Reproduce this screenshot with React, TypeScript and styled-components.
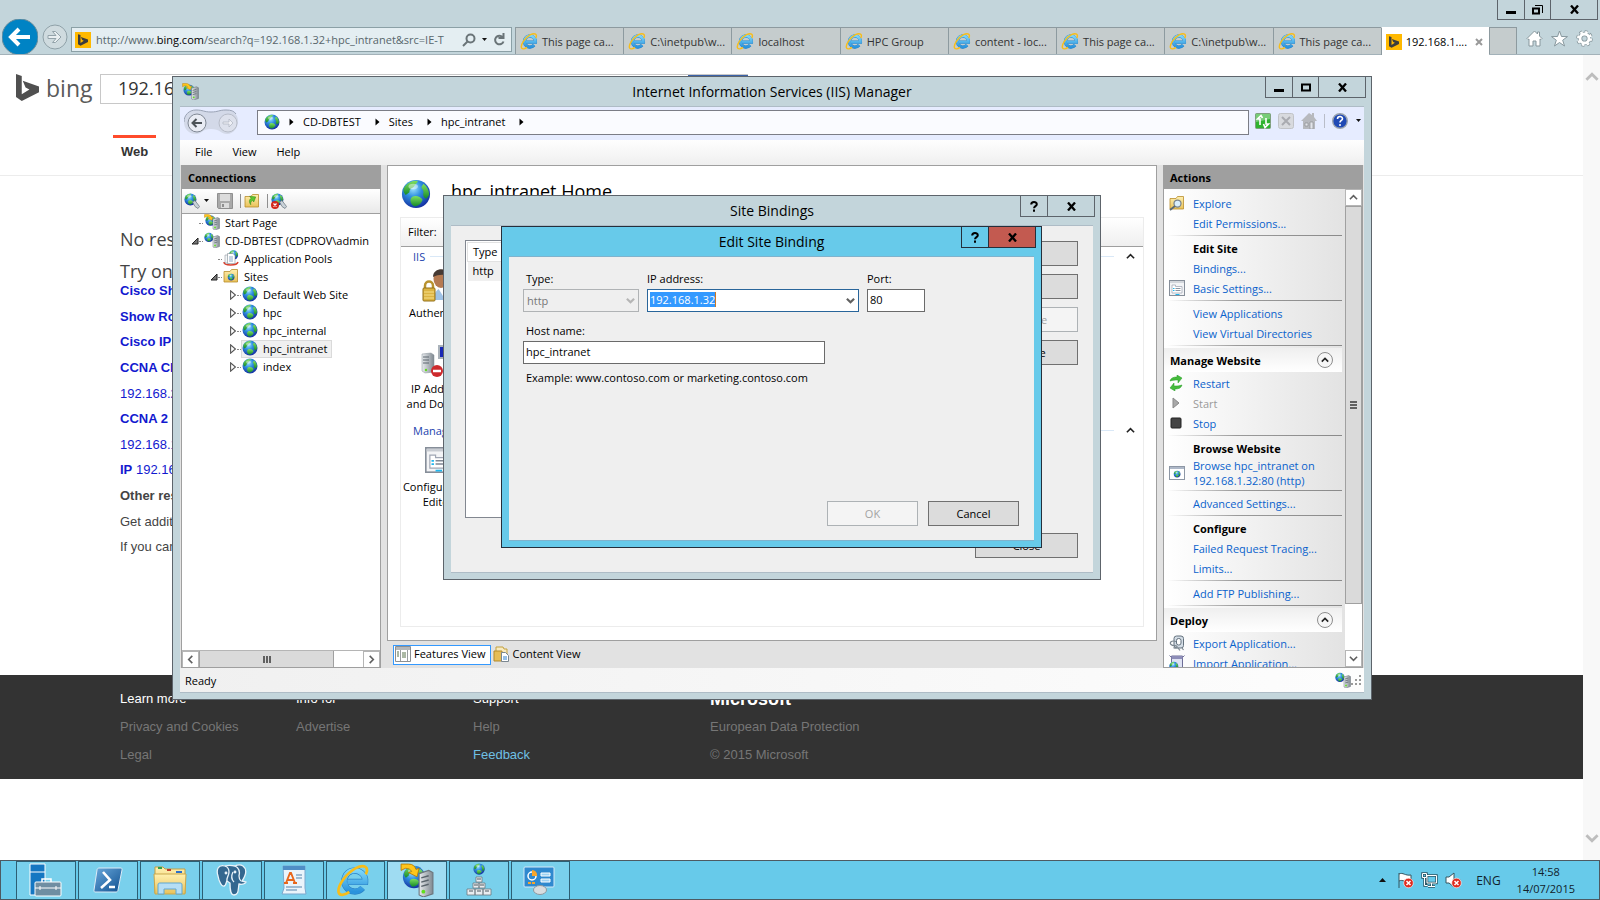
import React from "react";
import styled, { createGlobalStyle, css } from "styled-components";

const ui = `"Open Sans", "Noto Sans", sans-serif`;
const web = `"Liberation Sans", Arial, sans-serif`;

const GlobalStyle = createGlobalStyle`
  * { box-sizing: border-box; }
  body { margin: 0; background: #fff; font-family: ${ui}; font-size: 11px; color: #000; }
  button, input, select { font: inherit; color: inherit; margin: 0; padding: 0; border-radius: 0; }
  a { color: inherit; text-decoration: none; }
  svg { display: block; flex: none; }
  ul { list-style: none; margin: 0; padding: 0; }
  h1, h2, h3, p { margin: 0; font-size: inherit; font-weight: inherit; }
`;

/* ---------- icons ---------- */

type IconProps = { size?: number };

const DefsSvg = styled.svg`position: absolute;`;
const Defs = () => (
  <DefsSvg width="0" height="0" aria-hidden="true">
    <defs>
      <radialGradient id="sea" cx=".4" cy=".3" r=".75">
        <stop offset="0" stopColor="#9fe4ff" />
        <stop offset=".4" stopColor="#2f8fe0" />
        <stop offset="1" stopColor="#12279b" />
      </radialGradient>
      <linearGradient id="land" x1="0" y1="0" x2="0" y2="1">
        <stop offset="0" stopColor="#7fe060" />
        <stop offset="1" stopColor="#168a2a" />
      </linearGradient>
      <linearGradient id="ieBlue" x1="0" y1="0" x2="0" y2="1">
        <stop offset="0" stopColor="#7dd6fa" />
        <stop offset="1" stopColor="#2a93dc" />
      </linearGradient>
      <linearGradient id="steel" x1="0" y1="0" x2="1" y2="0">
        <stop offset="0" stopColor="#e8ebee" />
        <stop offset="1" stopColor="#7f8890" />
      </linearGradient>
      <linearGradient id="folder" x1="0" y1="0" x2="0" y2="1">
        <stop offset="0" stopColor="#fff0b0" />
        <stop offset="1" stopColor="#e9c25a" />
      </linearGradient>
      <linearGradient id="shell" x1="0" y1="0" x2="1" y2="1">
        <stop offset="0" stopColor="#6aa9dc" />
        <stop offset="1" stopColor="#0f4f8f" />
      </linearGradient>
    </defs>
  </DefsSvg>
);

const GlobeArt = () => (
  <>
    <circle cx="16" cy="16" r="15" fill="url(#sea)" />
    <path d="M4 8C8 3 14 1 18 2c-1 3-3 3-4 6-2 2-5 2-5 6l-4 3C2 14 2 11 4 8Z" fill="url(#land)" />
    <path d="M24 5c4 3 6 7 6 12l-3 4c-3-1-4-4-3-7 0-3-3-4-2-6Z" fill="url(#land)" />
    <path d="M12 19c4-2 9 0 11 3-1 4-5 7-9 7-3-1-6-7-2-10Z" fill="url(#land)" />
    <ellipse cx="13" cy="8" rx="5" ry="3" fill="#fff" opacity=".45" />
  </>
);

const Globe = ({ size = 16 }: IconProps) => (
  <svg width={size} height={size} viewBox="0 0 32 32"><GlobeArt /></svg>
);

const ServerArt = () => (
  <>
    <path d="M18 10l9-3 4 2v20l-9 3-4-2Z" fill="url(#steel)" stroke="#6c757c" />
    <path d="M20 14l7-2M20 18l7-2M20 22l7-2" stroke="#59636b" strokeWidth="1.400" />
    <circle cx="22" cy="27" r="1.800" fill="#5fe01c" />
  </>
);

const IisIcon = ({ size = 16, arrow = true }: IconProps & { arrow?: boolean }) => (
  <svg width={size} height={size} viewBox="0 0 32 32">
    <g transform={arrow ? "translate(2 2) scale(.7)" : "translate(0 1) scale(.62)"}><GlobeArt /></g>
    {arrow && <path d="M1 1h7c4 0 6 2 7 5l3-1-2 8-8-4 3-1c-1-2-3-3-6-3l-4 2Z" fill="#ffc61a" stroke="#b57a00" strokeWidth=".8" />}
    <ServerArt />
  </svg>
);

const IeIcon = ({ size = 18 }: IconProps) => (
  <svg width={size} height={size} viewBox="0 0 24 24" fill="none">
    <path d="M8 13.400H20.600A7.400 7.400 0 1 0 18.800 17.600" stroke="#2a80c4" strokeWidth="4.400" />
    <path d="M8 13.400H20.600A7.400 7.400 0 1 0 18.800 17.600" stroke="url(#ieBlue)" strokeWidth="3.600" />
    <path d="M21 8C23.600 3 20 .6 14 3.600 7 7.400 1 16 1.800 20.500 2.400 23.600 6 22.800 9.400 20.400" stroke="#f7bd1a" strokeWidth="1.900" />
  </svg>
);

const BingMark = ({ w, h, fill }: { w: number; h: number; fill: string }) => (
  <svg width={w} height={h} viewBox="0 0 24 28">
    <path d="M0 0l6 2v19l8-5-4-2-3-7 17 6v6L6 28l-6-4Z" fill={fill} />
  </svg>
);

const BingTileBox = styled.span`
  display: flex; align-items: center; justify-content: center; flex: none;
  width: 16px; height: 16px; background: #ffb900;
`;
const BingTile = () => <BingTileBox><BingMark w={10} h={12} fill="#3c3c3c" /></BingTileBox>;

const FolderIcon = ({ kind }: { kind: "up" | "sites" | "explore" }) => (
  <svg width="16" height="16" viewBox="0 0 32 32">
    <path d="M2 7h12l3-4h12v25H2Z" fill="url(#folder)" stroke="#b98d2b" strokeWidth="1.600" />
    {kind === "up" && <path d="M8 20c0-7 3-10 8-10V5l9 8-9 6v-4c-4 0-6 1-8 5Z" fill="#5cc431" stroke="#2f8a12" transform="rotate(-35 16 13)" />}
    {kind === "sites" && <g transform="translate(9 11) scale(.45)"><GlobeArt /></g>}
    {kind === "explore" && (
      <>
        <circle cx="17" cy="17" r="7" fill="#d8eefc" stroke="#78848e" strokeWidth="2.500" />
        <path d="M12 22l-10 8" stroke="#5b6a75" strokeWidth="3.500" />
      </>
    )}
  </svg>
);

const PoolsIcon = () => (
  <svg width="16" height="16" viewBox="0 0 32 32">
    <g transform="translate(11 0) scale(.62)"><GlobeArt /></g>
    <path d="M2 24c0 8 26 8 28 0" fill="none" stroke="#d8412f" strokeWidth="3" />
    <path d="M4 10h10v16H4z" fill="#f4f6f8" stroke="#7c8790" />
    <path d="M9 7h11l4 4v16H9z" fill="#fff" stroke="#6a7680" />
    <path d="M12 14h8M12 18h8M12 22h8" stroke="#6f93b5" strokeWidth="1.600" />
  </svg>
);

const ConnectIcon = ({ remove }: { remove?: boolean }) => (
  <svg width="16" height="16" viewBox="0 0 32 32">
    <g transform="scale(.8)"><GlobeArt /></g>
    <path d="M17 18l5-3 9 12-3 4-6-4Z" fill="#c9d2d8" stroke="#6c7880" strokeWidth="1.500" />
    {remove && (
      <>
        <circle cx="8" cy="24" r="8" fill="#d3261a" />
        <path d="M5 21l6 6M11 21l-6 6" stroke="#fff" strokeWidth="2.500" />
      </>
    )}
  </svg>
);

const SaveIcon = () => (
  <svg width="16" height="16" viewBox="0 0 16 16">
    <path d="M.5.500h15v15h-14l-1-1Z" fill="#a9a9a9" stroke="#8f8f8f" />
    <path d="M3 1h10v7H3zM4 10h8v5H4z" fill="#dcdcdc" />
    <path d="M5 11h2v3H5z" fill="#8f8f8f" />
  </svg>
);

const FormIcon = ({ size = 16 }: IconProps) => (
  <svg width={size} height={size} viewBox="0 0 32 32">
    <rect x="1" y="1" width="30" height="30" fill="#f3f4f6" stroke="#868e99" strokeWidth="2" />
    <path d="M2 4h28" stroke="#c8ccd2" strokeWidth="3" />
    <path d="M6 10h7v3h13v13H6Z" fill="#fff" stroke="#a0a6b4" strokeWidth="1.500" />
    <path d="M13 17h10M13 21h10" stroke="#7f8794" strokeWidth="1.800" />
    <path d="M8 17h3M8 21h3M13 29h8" stroke="#1fb6ee" strokeWidth="2" />
  </svg>
);

const BrowseIcon = () => (
  <svg width="16" height="16" viewBox="0 0 32 32">
    <rect x="1" y="3" width="30" height="26" fill="#fff" stroke="#8d97a5" strokeWidth="2" />
    <path d="M2 6h28" stroke="#aeb8c8" strokeWidth="4" />
    <g transform="translate(9 11) scale(.45)"><GlobeArt /></g>
  </svg>
);

const RestartIcon = () => (
  <svg width="14" height="16" viewBox="0 0 14 16" fill="#45bb3c" stroke="#249a24" strokeWidth=".5">
    <path d="M1 6c1-3 3-4 7-4V0l5 3-4 5V5C6 5 4 5 1 6Z" />
    <path d="M13 10c-1 3-3 4-7 4v2l-5-3 4-5v3c3 0 5 0 8-1Z" />
  </svg>
);

const PlayIcon = () => (
  <svg width="14" height="16" viewBox="0 0 14 16"><path d="M4 3v10l6-5Z" fill="#a8a8a8" stroke="#8a8a8a" /></svg>
);
const StopIcon = () => (
  <svg width="14" height="16" viewBox="0 0 14 16"><rect x="2" y="3" width="10" height="10" rx="1" fill="#444" stroke="#222" /></svg>
);

const ExportIcon = () => (
  <svg width="16" height="16" viewBox="0 0 32 32" fill="none">
    <rect x="10" y="2" width="19" height="24" rx="5" fill="#d4dde6" stroke="#63717d" strokeWidth="2" />
    <rect x="15" y="7" width="9" height="13" rx="4" fill="#fff" stroke="#63717d" strokeWidth="2" />
    <path d="M14 13C5 10 0 15 4 19s10 1 12 4-5 4-7 2M18 26l4 5M26 26l3 4" stroke="#7c8790" strokeWidth="2.400" />
  </svg>
);
const ImportIcon = () => (
  <svg width="16" height="16" viewBox="0 0 32 32">
    <path d="M1 1l6 6M31 1l-6 6" stroke="#73739a" strokeWidth="2" />
    <path d="M5 2h22v27H5z" fill="#dfe3f3" stroke="#6d6d96" strokeWidth="2" />
    <path d="M5 2h22v6H5z" fill="#8d8db8" />
    <g transform="translate(0 13) scale(.6)"><GlobeArt /></g>
  </svg>
);

const AuthIcon = () => (
  <svg width="32" height="34" viewBox="0 0 32 34">
    <path d="M12 31c0-9 4-12 9-12s10 3 10 12Z" fill="#9fc3e6" />
    <path d="M16 19l5 8 3-8Z" fill="#fff" />
    <ellipse cx="19" cy="10" rx="7.500" ry="9" fill="#b57a51" />
    <path d="M11 8C11 1 18-1 24 1c4 1 4 5 4 7-4-3-11-3-17 0Z" fill="#463a33" />
    <path d="M3 21v-4c0-6 8-6 8 0v4" fill="none" stroke="#b8922f" strokeWidth="2.500" />
    <rect x="1" y="19" width="12" height="13" rx="1" fill="#dcb443" stroke="#93701a" />
    <path d="M2 23h10M2 26h10M2 29h10" stroke="#f7e08c" />
  </svg>
);
const IpIcon = () => (
  <svg width="34" height="34" viewBox="0 0 34 34">
    <path d="M1 9l9-1 3 2v17l-9 1-3-2Z" fill="url(#steel)" stroke="#879098" strokeWidth=".5" />
    <path d="M2 12h6M2 15h6M2 18h6" stroke="#5c666e" />
    <circle cx="5" cy="25" r="1.200" fill="#60d81e" />
    <rect x="18" y="1" width="15" height="12" fill="#1627b6" stroke="#aab2ba" strokeWidth="2" />
    <circle cx="16" cy="26" r="6" fill="#cd2a2d" />
    <path d="M12 26h8" stroke="#fff" strokeWidth="2.500" />
  </svg>
);

const RefreshIcon = () => (
  <svg width="16" height="16" viewBox="0 0 16 16">
    <rect x=".5" y=".5" width="15" height="15" rx="1" fill="#2fb32f" stroke="#7f9f7f" />
    <path d="M1 1h14v5L1 9Z" fill="#fff" opacity=".35" />
    <path d="M5 12V6H2.500L6 2.500 7.500 5M11 5v6h2.500L10 14.500 8.500 11" fill="none" stroke="#fff" strokeWidth="1.600" />
  </svg>
);
const StopLoadIcon = () => (
  <svg width="16" height="16" viewBox="0 0 16 16">
    <rect x=".5" y=".5" width="15" height="15" rx="2" fill="#d8dade" stroke="#c1c3c7" />
    <path d="M4 4l8 8M12 4l-8 8" stroke="#a9abb0" strokeWidth="2" />
  </svg>
);
const HouseIcon = () => (
  <svg width="16" height="16" viewBox="0 0 16 16">
    <path d="M0 8L7 1l1-1 3 2V0h2v4l3 4h-2v8H2V8Z" fill="#b7b9be" />
    <path d="M4 10h3v3H4zM9 9h3v7H9z" fill="#e3e5ea" stroke="#8d8f94" strokeWidth=".7" />
  </svg>
);
const HelpIcon = () => (
  <svg width="16" height="16" viewBox="0 0 16 16">
    <circle cx="8" cy="8" r="7.300" fill="#1f49b5" stroke="#9aa3ad" strokeWidth="1.400" />
    <path d="M5.500 6c0-3.300 5-3.200 5-.3C10.500 7.500 8 7.500 8 9.600" fill="none" stroke="#fff" strokeWidth="1.600" />
    <circle cx="8" cy="12" r="1" fill="#fff" />
  </svg>
);

const FeaturesIcon = () => (
  <svg width="16" height="16" viewBox="0 0 16 16">
    <path d="M.5.500h15v15H.500Z" fill="#fff" stroke="#8b8f92" />
    <path d="M1 1h14v3H1z" fill="#b5b8ba" />
    <path d="M5.500 4v11M12.500 4v11" stroke="#9a9ea1" />
    <path d="M2 6h2M2 8h2M2 10h2M7 7h4M7 9h4M7 11h4" stroke="#59734a" />
  </svg>
);
const ContentIcon = () => (
  <svg width="16" height="16" viewBox="0 0 16 16">
    <path d="M3 1h7l1 2h3v8H3Z" fill="#f7eac0" stroke="#c4a13f" />
    <path d="M1 5h8v10H1Z" fill="#e6bd57" stroke="#b48a2b" />
    <path d="M8.500 6.500h4l3 3v6h-7Z" fill="#fff" stroke="#7a8791" />
    <path d="M10 11h4M10 13h4" stroke="#2f80cf" />
  </svg>
);

const Tri = ({ c = "#000", open, size = 5 }: { c?: string; open?: boolean; size?: number }) => (
  <svg width={size} height={size * 2 - 2} viewBox="0 0 5 8"><path d="M.5.500v7l4-3.500Z" fill={open ? "#fff" : c} stroke={c} strokeWidth={open ? 0.9 : 0} /></svg>
);
const Expanded = () => <svg width="8" height="8" viewBox="0 0 8 8"><path d="M7 1v6H1Z" fill="#777" stroke="#222" /></svg>;
const Caret = ({ up }: { up?: boolean }) => (
  <svg width="7" height="4" viewBox="0 0 7 4"><path d={up ? "M0 4L3.500 0 7 4Z" : "M1 0h5L3.500 3Z"} fill="#111" /></svg>
);
const Chevron = ({ dir, size = 9, c = "#606060", sw = 1.8 }: { dir: "up" | "down" | "left" | "right"; size?: number; c?: string; sw?: number }) => (
  <svg width={size} height={size} viewBox="0 0 10 10" fill="none" stroke={c} strokeWidth={sw}>
    <path d={{ up: "M1 7l4-4 4 4", down: "M1 3l4 4 4-4", left: "M7 1L3 5l4 4", right: "M3 1l4 4-4 4" }[dir]} />
  </svg>
);

const MinGlyph = () => <svg width="10" height="9" viewBox="0 0 10 9"><path d="M0 6h10v3H0Z" /></svg>;
const MaxGlyph = () => <svg width="10" height="9" viewBox="0 0 10 9"><path d="M1 1.500h8v6H1Z" fill="none" stroke="#000" strokeWidth="2" /></svg>;
const RestoreGlyph = () => (
  <svg width="11" height="10" viewBox="0 0 11 10" fill="none" stroke="#000">
    <path d="M1 3.500h6v5H1Z" strokeWidth="2" /><path d="M3 .5h7.500V8" />
  </svg>
);
const CloseGlyph = () => <svg width="9" height="9" viewBox="0 0 9 9"><path d="M1 .5l7 8M8 .5l-7 8" stroke="#000" strokeWidth="2.300" /></svg>;
const HelpGlyph = () => (
  <svg width="8" height="11" viewBox="0 0 8 11" fill="none" stroke="#000" strokeWidth="2">
    <path d="M1.200 3.500C1.200.300 6.800.300 6.800 3.200 6.800 5.200 4 5 4 7.300M4 8.600v2.200" />
  </svg>
);

/* ---------- Internet Explorer ---------- */

const Desktop = styled.div`
  position: relative; min-height: 100vh; display: flex; flex-direction: column; overflow: hidden;
`;
const Chrome = styled.header`
  height: 55px; background: #c3d5db; border-bottom: 1px solid #a3b2b9;
  display: flex; align-items: flex-end; position: relative;
`;
const NavButtons = styled.div`
  width: 71px; height: 36px; overflow: hidden; flex: none; padding: 1px 2px 0; display: flex; gap: 4px;
`;
const RoundButton = styled.button`border: 0; background: none; display: flex; align-items: flex-start;`;
const AddressBar = styled.div`
  flex: 0 1 441px; min-width: 0; height: 25px; margin: 0 3px 2px 0; padding: 0 5px 0 3px;
  border: 1px solid #8ba0a6; background: #e4eef2; display: flex; align-items: center; gap: 5px;
`;
const Url = styled.div`
  flex: 1; min-width: 0; overflow: hidden; white-space: nowrap; line-height: 20px; color: #58666c;
  b { font-weight: 400; color: #000; }
`;
const GlyphButton = styled.button`border: 0; background: none; display: flex; align-items: center; justify-content: center;`;
const Tabs = styled.nav`flex: 1; min-width: 0; height: 27px; display: flex;`;
const Tab = styled.a<{ $active?: boolean }>`
  flex: 1 1 108px; min-width: 0; display: flex; align-items: center; gap: 4px; padding: 0 3px 0 4px;
  border: 1px solid #8d9a9f; border-width: 1px 0 0 1px; background: #c5cccd;
  color: #333; white-space: nowrap; overflow: hidden;
  span { flex: 1; }
  ${BingTileBox} { flex: none; }
  ${p => p.$active && css`background: #fff; color: #000; height: 28px; border-top-color: #fff; padding-right: 6px; z-index: 1;`}
`;
const NewTab = styled.button`
  flex: 0 0 28px; border: 1px solid #8d9a9f; border-bottom: 0; background: #c5cccd;
`;
const ChromeTools = styled.div`width: 83px; height: 27px; flex: none; display: flex; align-items: center; justify-content: center; gap: 8px; padding: 0 0 4px 2px;`;

const CaptionButtons = styled.div`position: absolute; top: -1px; right: 5px; display: flex;`;
const CaptionButton = styled.button<{ $w: number; $close?: boolean; $dark?: string }>`
  width: ${p => p.$w}px; height: 22px; margin-right: -1px; border: 1px solid ${p => p.$dark ?? "#5d646b"};
  background: ${p => (p.$close ? "#c35a50" : "none")};
  display: flex; align-items: center; justify-content: center;
`;

const Viewport = styled.div`flex: 1; display: flex; background: #fff;`;
const Page = styled.main`flex: 1; min-width: 0; font-family: ${web}; font-size: 13px;`;
const PageScroll = styled.div`
  width: 17px; background: #f8f8f8; display: flex; flex-direction: column; justify-content: space-between; align-items: center; padding: 15px 0 15px;
`;
const PageHeader = styled.div`height: 121px; padding: 19px 16px 0; border-bottom: 1px solid #ececec;`;
const SearchRow = styled.form`display: flex; height: 30px; align-items: center;`;
const Brand = styled.a`
  display: flex; align-items: center; gap: 7px; width: 84px; font: 23px/26px ${ui}; color: #5a5a5a; padding-bottom: 3px;
`;
const SearchInput = styled.input`
  width: 588px; height: 30px; border: 1px solid #c8c8c8; border-right: 0; padding: 0 17px 2px; font: 18px ${ui}; color: #333;
`;
const SearchButton = styled.button`width: 60px; height: 30px; border: 1px solid #c8c8c8; border-width: 1px 0; background: #3a62a8;`;
const PageNav = styled.nav`padding: 31px 97px 0; display: flex;`;
const PageNavLink = styled.a`
  width: 43px; border-top: 3px solid #ff4b2b; padding-top: 5px; line-height: 18px; text-align: center; font-weight: 700; color: #333;
`;
const Results = styled.section`padding: 51px 120px 109px;`;
const Lead = styled.p`font: 18px/24px ${ui}; color: #444; & + & { margin-top: 8px; }`;
const ResultList = styled.ul`
  height: 282px; margin-top: 1px; display: grid; grid-auto-rows: 1fr; line-height: 14px; color: #444; white-space: nowrap;
`;
const ResultLink = styled.a`color: #1219cf;`;
const Footer = styled.footer`
  background: #333; color: #767676; padding: 10px 120px; display: grid; grid-template-columns: 176px 177px 237px 1fr; line-height: 28px;
`;
const FooterHead = styled.h3<{ $brand?: boolean }>`
  color: #fff; ${p => p.$brand && css`font-size: 18px; font-weight: 700;`}
`;
const Feedback = styled.a`color: #6fc0e4;`;

/* ---------- windows ---------- */

const Window = styled.section<{ $active?: boolean }>`
  position: absolute; display: flex; flex-direction: column; padding: 0 7px 6px;
  background: ${p => (p.$active ? "#67caea" : "#c3d5db")};
  border: 1px solid ${p => (p.$active ? "#252f3b" : "#5d646b")};
`;
const IisWindow = styled(Window)`left: 172px; top: 76px; width: 75%; height: 624px;`;
const BindingsWindow = styled(Window)`left: 443px; top: 195px; width: 658px; height: 385px;`;
const EditWindow = styled(Window)`left: 501px; top: 226px; width: 541px; height: 322px;`;
const TitleBar = styled.div`
  height: 29px; flex: none; display: flex; align-items: center; padding-left: 2px; position: relative;
  h1 { position: absolute; left: 0; right: 0; text-align: center; font-size: 14px; line-height: 29px; pointer-events: none; }
  ${CaptionButtons} { right: -1px; }
`;
const Client = styled.div<{ $active?: boolean }>`
  flex: 1; min-height: 0; display: flex; flex-direction: column; background: #efefef;
  border: 1px solid ${p => (p.$active ? "#7fb3cd" : "#aebcc6")}; border-width: 1px 0;
`;

const CrumbRow = styled.div`
  height: 33px; flex: none; background: #e6ecff; display: flex; align-items: center; padding: 0 2px 3px 4px;
`;
const CrumbBar = styled.nav`
  flex: 1; height: 25px; border: 1px solid #7b7d86; background: #fafbff; margin: 0 6px 0 19px; padding: 0 0 1px 6px;
  display: flex; align-items: center;
`;
const Crumb = styled.a`padding: 0 14px 0 9px;`;
const CrumbGlobe = styled.span`padding-right: 9px;`;
const CrumbTools = styled.div`display: flex; align-items: center; gap: 7px; padding-bottom: 3px;`;
const ToolRule = styled.i<{ $dark?: boolean }>`width: 1px; height: 14px; background: ${p => (p.$dark ? "#8f8f8f" : "#b9bdc8")};`;
const MenuBar = styled.nav`
  height: 25px; flex: none; background: linear-gradient(#fefefe, #efefef); display: flex; gap: 20px; padding: 0 15px; line-height: 22px;
  button { border: 0; background: none; padding-bottom: 2px; }
`;
const Body = styled.div`
  flex: 1; min-height: 0; background: #e2e2e2; display: grid; grid-template-columns: 200px minmax(0, 1fr) 200px; gap: 6px; padding: 0 1px;
`;
const Panel = styled.section`
  min-height: 0; display: flex; flex-direction: column; border: 1px solid #9f9f9f; background: #fff; overflow: hidden;
`;
const PanelTitle = styled.h2`height: 23px; flex: none; background: #9f9f9f; padding: 0 6px; line-height: 23px; font-weight: 700;`;
const PanelTools = styled.div`
  height: 25px; flex: none; border-bottom: 1px solid #9f9f9f; background: linear-gradient(#fff, #e9e9e9);
  display: flex; align-items: center; padding: 0 2px; gap: 7px;
`;
const ToolGroup = styled.span`display: flex; align-items: center; gap: 3px;`;
const Tree = styled.ul`flex: 1; min-height: 0; overflow: hidden;`;
const TreeRow = styled.li<{ $depth: number }>`
  height: 18px; display: flex; align-items: center; white-space: nowrap; padding-left: ${p => 8 + 19 * p.$depth}px;
`;
const Twisty = styled.span`width: 9px; flex: none; display: flex; justify-content: center;`;
const Dots = styled.i`width: 4px; flex: none; border-top: 1px dotted #888;`;
const Node = styled.a<{ $selected?: boolean }>`
  height: 18px; display: flex; align-items: center; gap: 5px; padding: 0 4px 2px 0;
  border: 1px solid ${p => (p.$selected ? "#dadada" : "transparent")}; background: ${p => (p.$selected ? "#f0f0f0" : "none")};
`;
const HScroll = styled.div`height: 17px; flex: none; border-top: 1px solid #b5b5b5; display: grid; grid-template-columns: 17px 135px 1fr 17px;`;
const ScrollButton = styled.button`
  border: 1px solid #b5b5b5; background: #fff; display: flex; align-items: center; justify-content: center; height: 17px;
`;
const HThumb = styled.div`border: 1px solid #a0a0a0; border-width: 0 1px; background: #dadada; display: flex; justify-content: center; align-items: center; gap: 1px;`;
const VThumb = styled.div`
  height: 398px; border: 1px solid #a0a0a0; background: #dadada; display: flex; flex-direction: column; justify-content: center; align-items: center; gap: 1px;
`;
const Grip = styled.i<{ $v?: boolean }>`background: #606060; width: ${p => (p.$v ? 7 : 2)}px; height: ${p => (p.$v ? 2 : 7)}px;`;

const Center = styled.div`display: flex; flex-direction: column; min-height: 0; min-width: 0;`;
const HomePanel = styled(Panel)`flex: 1; padding: 13px 12px;`;
const HomeTitle = styled.div`
  height: 38px; flex: none; display: flex; align-items: flex-start; gap: 20px; padding-left: 1px;
  h1 { font-size: 18px; line-height: 24px; }
`;
const FeatureBox = styled.div`flex: 1; border: 1px solid #ececec; overflow: hidden;`;
const FilterBar = styled.div`height: 29px; border-bottom: 1px solid #9f9f9f; background: linear-gradient(#fff, #efefef); padding: 0 7px; line-height: 27px;`;
const GroupHead = styled.div`
  height: 20px; display: flex; align-items: center; gap: 5px; padding: 0 8px 2px 12px; color: #1b3fae;
  i { flex: 1; height: 1px; background: #d9e8f7; }
  svg { margin-left: 7px; }
`;
const Feature = styled.a<{ $h: number }>`
  width: 74px; height: ${p => p.$h}px; display: flex; flex-direction: column; align-items: center; text-align: center; line-height: 15px; white-space: nowrap;
`;
const FeatureArt = styled.span`height: 38px; display: flex; align-items: center;`;
const ViewTabs = styled.div`height: 27px; flex: none; display: flex; align-items: center; padding: 0 6px;`;
const ViewTab = styled.button<{ $on?: boolean }>`
  height: 20px; display: flex; align-items: center; gap: 3px; padding: 0 5px 2px 1px; white-space: nowrap;
  border: 1px solid ${p => (p.$on ? "#3399ff" : "transparent")}; background: ${p => (p.$on ? "#fff" : "none")};
`;

const ActionBody = styled.div`flex: 1; min-height: 0; display: grid; grid-template-columns: 1fr 17px; background: linear-gradient(90deg, #fff, #e0e0e0);`;
const ActionList = styled.div`overflow: hidden; padding-top: 5px; padding-right: 3px; white-space: nowrap;`;
const VScroll = styled.div`background: #fff; display: grid; grid-template-rows: 17px 398px 1fr 17px;`;
const ActionRow = styled.div`height: 20px; display: flex; align-items: center; padding-bottom: 2px;`;
const ActionIcon = styled.span`width: 29px; padding-left: 5px; flex: none;`;
const ActionLink = styled.a<{ $off?: boolean }>`color: ${p => (p.$off ? "#9a9a9a" : "#0a62cc")}; line-height: 15px;`;
const ActionHead = styled.h3`font-weight: 700;`;
const ActionTall = styled(ActionRow)`height: 30px;`;
const Rule = styled.div<{ $tight?: boolean }>`
  height: ${p => (p.$tight ? 4 : 5)}px; padding-top: 1px;
  &::before { content: ""; display: block; height: 1px; margin-left: 3px; background: linear-gradient(90deg, transparent, #9a9a9a 40%, #8a8a8a); }
`;
const ActionGroup = styled.div`
  height: 24px; margin-bottom: 2px; padding: 0 9px 0 6px; display: flex; align-items: center; justify-content: space-between; font-weight: 700;
  background: linear-gradient(#efefef, #fff);
`;
const Collapse = styled.button`
  width: 16px; height: 16px; border: 1px solid #8d8d8d; border-radius: 8px; background: #f6f6f6; display: flex; align-items: center; justify-content: center;
`;
const StatusBar = styled.footer`
  height: 24px; flex: none; background: linear-gradient(90deg, #f0f0f0, #fdfdfd); padding: 0 3px 0 5px; display: flex; align-items: center;
  span { flex: 1; }
`;

/* ---------- dialogs ---------- */

const DialogButton = styled.button<{ $w: number }>`
  width: ${p => p.$w}px; height: 25px; border: 1px solid #707070; background: #dcdcdc;
  &:disabled { border-color: #adb2b5; background: #f4f4f4; color: #a3a3a3; }
`;
const BindingsForm = styled.div`display: grid; grid-template-columns: 1fr 103px; gap: 15px 10px; padding: 14px 15px 0 14px;`;
const ButtonColumn = styled.div`display: flex; flex-direction: column; gap: 8px; padding-top: 1px;`;
const ListBox = styled.div`height: 278px; border: 1px solid #828790; background: #fff; padding: 1px;`;
const BindingsTable = styled.table`
  width: 100%; border-collapse: collapse; text-align: left;
  th { font-weight: 400; height: 19px; padding: 0 5px 2px; border: 1px solid #e2e2e2; }
  td { height: 19px; padding: 0 5px 2px; background: #f0f0f0; }
`;
const CloseRow = styled.div`grid-column: 2;`;

const EditForm = styled.form`flex: 1; display: flex; flex-direction: column; padding: 13px 15px 14px 14px;`;
const FieldRow = styled.div`display: flex; gap: 8px; margin-bottom: 10px;`;
const Field = styled.div<{ $w: number }>`width: ${p => p.$w}px;`;
const Label = styled.label<{ $in?: boolean }>`display: block; height: 19px; line-height: 18px; padding-left: ${p => (p.$in ? 3 : 0)}px;`;
const TextBox = styled.input`display: block; width: 100%; height: 23px; border: 1px solid #6a6a6a; background: #fff; padding: 0 2px 2px;`;
const SelectWrap = styled.div`
  display: grid; align-items: center;
  > * { grid-area: 1 / 1; }
  svg { justify-self: end; margin-right: 4px; pointer-events: none; }
`;
const TypeSelect = styled.select`
  appearance: none; width: 100%; height: 23px; border: 1px solid #b0b3b5; background: #efefef; padding: 0 3px;
  &:disabled { color: #777; opacity: 1; }
`;
const Combo = styled.div`height: 23px; border: 1px solid #29659a; background: #fff; display: flex; align-items: center; justify-content: space-between; padding: 0 3px 0 2px;`;
const ComboInput = styled.input`
  field-sizing: content; height: 15px; margin-bottom: 2px; border: 0; border-right: 1px solid #d07a20; outline: 0; background: #3399ff; color: #fff; line-height: 15px;
`;
const Hint = styled.p`padding: 0 3px; margin-top: -5px; line-height: 18px;`;
const DialogFooter = styled.div`margin-top: auto; display: flex; justify-content: flex-end; gap: 10px;`;

/* ---------- taskbar ---------- */

const Taskbar = styled.footer`
  height: 40px; flex: none; background: #67caea; border: 1px solid #4d5a62; padding: 0 24px 0 15px; display: flex; justify-content: space-between; align-items: center;
`;
const TaskButtons = styled.div`display: flex; gap: 2px; height: 39px;`;
const TaskButton = styled.button<{ $active?: boolean; $w?: number }>`
  width: ${p => p.$w ?? 60}px; height: 39px; border: 1px solid #2d5f74; background: ${p => (p.$active ? "#9fdcf2" : "#79d0ec")};
  display: flex; align-items: center; justify-content: center;
`;
const Stack = styled.i`width: 4px; margin-left: -3px; height: 39px; border: 1px solid #2d5f74; border-left: 0; background: #79d0ec;`;
const Tray = styled.div`display: flex; align-items: center; gap: 7px; color: #12222a;`;
const Clock = styled.div`text-align: center; line-height: 17px; margin-left: 9px;`;
const Lang = styled.span`margin-left: 7px; font-size: 12px;`;
const TrayToggle = styled(GlyphButton)`margin-right: 4px;`;

const ServerManagerIcon = () => (
  <svg width="34" height="34" viewBox="0 0 34 34">
    <path d="M1 1h15v31H1z" fill="#1577c2" stroke="#fff" />
    <path d="M1 9h15" stroke="#fff" />
    <path d="M13 19v-3h9v3" fill="none" stroke="#fff" strokeWidth="1.500" />
    <rect x="6" y="19" width="26" height="14" rx="1" fill="#6f8ea2" stroke="#fff" />
    <path d="M6 25h26M11 23v4M27 23v4" stroke="#fff" />
  </svg>
);
const PowerShellIcon = () => (
  <svg width="30" height="26" viewBox="0 0 30 26">
    <path d="M6 1h22c1 0 1 1 1 2l-4 20c0 1-1 2-2 2H2c-1 0-1-1-1-2L4 3c0-1 1-2 2-2Z" fill="url(#shell)" stroke="#dcebf6" />
    <path d="M10 5l7 8-9 8M16 20h6" fill="none" stroke="#fff" strokeWidth="2.600" />
  </svg>
);
const ExplorerIcon = () => (
  <svg width="34" height="30" viewBox="0 0 34 30">
    <path d="M2 2h8l2 2h20v24H2Z" fill="url(#folder)" stroke="#c29f45" />
    <path d="M5 3h4" stroke="#31a04b" strokeWidth="2" />
    <path d="M14 5h4" stroke="#c03a2a" strokeWidth="2" />
    <path d="M23 7h6" stroke="#2c6fc9" strokeWidth="2" />
    <path d="M1 9h32l-1 20H2Z" fill="url(#folder)" stroke="#c9a74c" />
    <path d="M5 29V20c0-2 1-2 3-2h18c2 0 3 0 3 2v9h-6v-5H11v5Z" fill="#b5def5" stroke="#5ea7d2" />
  </svg>
);
const ElephantIcon = () => (
  <svg width="32" height="32" viewBox="0 0 32 32" fill="#33678f" stroke="#e9f3f9" strokeWidth="1.300">
    <path d="M9 2C2 0 0 6 2 12c1 6 4 11 6 10 2 0 2-4 3-5l3 2c0 5 0 12 4 12 5 0 4-6 5-11 4 1 7-1 7-2l-4-1c4-6 5-12 1-15-3-2-6-1-8 0-4-1-7-1-10 0Z" />
    <path d="M9 2c3 1 4 3 4 6 0 4-3 6-2 9M19 2c4 2 5 6 4 10 0 2 1 4 2 5M17 8c-2 4-1 8 1 10" fill="none" />
    <circle cx="10" cy="9" r=".8" /><circle cx="19" cy="8" r=".8" />
  </svg>
);
const WordPadIcon = () => (
  <svg width="26" height="30" viewBox="0 0 26 30">
    <path d="M2 1h22v22l1 6H1l2-6Z" fill="#eaf4fb" stroke="#7ba8cd" />
    <path d="M2 1h22v4H2Z" fill="#4f8ec6" />
    <path d="M5 18l4-10h1l4 10M7 15h6M3 18h4M12 18h4" fill="none" stroke="#e8671c" strokeWidth="1.900" />
    <path d="M15 10h6M15 13h6M5 22h16M5 25h11" stroke="#86a9c6" strokeWidth="1.300" />
  </svg>
);
const SitesIcon = () => (
  <svg width="26" height="34" viewBox="0 0 26 34">
    <g transform="translate(7 0) scale(.38)"><GlobeArt /></g>
    <g fill="#e9edf0" stroke="#6d7880" strokeWidth=".8">
      <path d="M10 14h6v5h-6zM7 20h6v5H7zM13 20h6v5h-6zM1 26h8v6H1zM9 26h8v6H9zM17 26h8v6h-8z" />
    </g>
    <path d="M11 16h4M8 22h4M14 22h4M3 28h4M11 28h4M19 28h4" stroke="#4e5960" />
  </svg>
);
const ControlIcon = () => (
  <svg width="32" height="30" viewBox="0 0 32 30">
    <rect x="1" y="2" width="30" height="20" rx="1" fill="#2f89cf" stroke="#d5e9f6" />
    <circle cx="9" cy="11" r="4" fill="none" stroke="#fff" strokeWidth="1.500" />
    <path d="M9 11V5a5 5 0 0 1 5 6Z" fill="#f8a52a" />
    <path d="M18 8h9v3h-9zM18 14h9v3h-9z" fill="#9ed2f3" stroke="#fff" />
    <path d="M5 18h3M9 18h3" stroke="#f8a52a" strokeWidth="2" />
    <ellipse cx="17" cy="25" rx="6.500" ry="4.500" fill="#d8dde0" stroke="#8d979d" />
  </svg>
);
const Badge = () => (
  <>
    <circle cx="11.500" cy="11" r="4.800" fill="#df2b1f" stroke="#fff" strokeWidth=".6" />
    <path d="M9.500 9l4 4M13.500 9l-4 4" stroke="#fff" strokeWidth="1.500" />
  </>
);
const FlagIcon = () => (
  <svg width="17" height="17" viewBox="0 0 17 17">
    <path d="M2 1v15M2 2c4-2 6 2 12 1v7c-6 1-8-3-12-1" fill="#fff" stroke="#35545f" />
    <Badge />
  </svg>
);
const NetIcon = () => (
  <svg width="17" height="17" viewBox="0 0 17 17" fill="none">
    <path d="M6 3.500h9.500v7.500H6zM10.500 11v3M7 14.500h7M1.500 1.500h4v4h-4zM3.500 5.500v8h3" stroke="#2c5361" strokeWidth="2.400" />
    <path d="M6 3.500h9.500v7.500H6zM10.500 11v3M7 14.500h7M1.500 1.500h4v4h-4zM3.500 5.500v8h3" stroke="#fff" />
  </svg>
);
const SoundIcon = () => (
  <svg width="17" height="17" viewBox="0 0 17 17">
    <path d="M1 5h3l5-4v14l-5-4H1Z" fill="#fff" stroke="#35545f" />
    <Badge />
  </svg>
);

/* ---------- data ---------- */

const tabTitles = ["This page ca...", "C:\\inetpub\\w...", "localhost", "HPC Group", "content - loc...", "This page ca...", "C:\\inetpub\\w...", "This page ca..."];

const results: { text: string; bold?: boolean; link?: boolean }[] = [
  { text: "Cisco Show", bold: true, link: true },
  { text: "Show Route", bold: true, link: true },
  { text: "Cisco IP", bold: true, link: true },
  { text: "CCNA Class", bold: true, link: true },
  { text: "192.168.2.1", link: true },
  { text: "CCNA 2", bold: true, link: true },
  { text: "192.168.1", link: true },
  { text: "IP|192.168", link: true },
  { text: "Other results", bold: true },
  { text: "Get additional" },
  { text: "If you cannot" },
];

const sites = ["Default Web Site", "hpc", "hpc_internal", "hpc_intranet", "index"];

const CaptionSet = ({ max }: { max: React.ReactNode }) => (
  <CaptionButtons>
    <CaptionButton $w={28} aria-label="Minimize"><MinGlyph /></CaptionButton>
    <CaptionButton $w={27} aria-label="Maximize">{max}</CaptionButton>
    <CaptionButton $w={48} aria-label="Close"><CloseGlyph /></CaptionButton>
  </CaptionButtons>
);

const DialogCaption = ({ active }: { active?: boolean }) => {
  const dark = active ? "#252f3b" : undefined;
  return (
    <CaptionButtons>
      <CaptionButton $w={28} $dark={dark} aria-label="Help"><HelpGlyph /></CaptionButton>
      <CaptionButton $w={48} $dark={dark} $close={active} aria-label="Close"><CloseGlyph /></CaptionButton>
    </CaptionButtons>
  );
};

const Action = ({ icon, children, off }: { icon?: React.ReactNode; children: React.ReactNode; off?: boolean }) => (
  <ActionRow><ActionIcon>{icon}</ActionIcon><ActionLink href="#" $off={off}>{children}</ActionLink></ActionRow>
);
const Head = ({ children }: { children: React.ReactNode }) => (
  <ActionRow><ActionIcon /><ActionHead>{children}</ActionHead></ActionRow>
);
const Group = ({ children }: { children: React.ReactNode }) => (
  <ActionGroup>
    {children}
    <Collapse aria-label="Collapse"><Chevron dir="up" size={8} c="#222" sw={2} /></Collapse>
  </ActionGroup>
);

const BrowserCaption = styled.div`
  position: absolute; top: 0; right: 0;
  ${CaptionButtons} { right: 3px; }
  ${CaptionButton} { height: 21px; }
`;

const Browser = () => (
  <>
    <Chrome>
      <NavButtons>
        <RoundButton aria-label="Back">
          <svg width="36" height="36" viewBox="0 0 36 36">
            <circle cx="18" cy="18" r="18" fill="#0083c4" stroke="#6d8f9d" strokeWidth="1" />
            <path d="M28 18H10M17 10l-8 8 8 8" fill="none" stroke="#fff" strokeWidth="4" />
          </svg>
        </RoundButton>
        <RoundButton aria-label="Forward">
          <svg width="26" height="36" viewBox="0 0 26 36">
            <circle cx="13" cy="18" r="12" fill="#cfdbdf" stroke="#8fa1a8" />
            <path d="M6 16.500h8l-3.500-4h3l5.500 5.500-5.500 5.500h-3l3.500-4H6Z" fill="#e9eff1" stroke="#93a3aa" />
          </svg>
        </RoundButton>
      </NavButtons>
      <AddressBar>
        <BingTile />
        <Url role="textbox" aria-label="Address">http://www.<b>bing.com</b>/search?q=192.168.1.32+hpc_intranet&amp;src=IE-T</Url>
        <GlyphButton aria-label="Search">
          <svg width="14" height="14" viewBox="0 0 14 14" fill="none" stroke="#6a7478" strokeWidth="2"><circle cx="8.500" cy="5.500" r="4" /><path d="M5.500 8.500L1 13" /></svg>
        </GlyphButton>
        <Caret />
        <GlyphButton aria-label="Refresh">
          <svg width="13" height="14" viewBox="0 0 13 14" fill="none" stroke="#6a7478" strokeWidth="2"><path d="M9.500 4A4.300 4.300 0 1 0 10.500 8.500M5.500 5h5V0" /></svg>
        </GlyphButton>
      </AddressBar>
      <Tabs>
        {tabTitles.map((t, i) => <Tab key={i} href="#"><IeIcon /><span>{t}</span></Tab>)}
        <Tab $active href="#"><BingTile /><span>192.168.1....</span>
          <svg width="8" height="8" viewBox="0 0 8 8"><path d="M1 1l6 6M7 1L1 7" stroke="#999" strokeWidth="2" /></svg>
        </Tab>
        <NewTab aria-label="New tab" />
      </Tabs>
      <ChromeTools>
        <svg width="17" height="17" viewBox="0 0 17 17" fill="#fff" stroke="#87979d"><path d="M1 8.500L8.500 1l3 3V2h2v4l2.500 2.500-1 1-1-.5v7h-4v-5H7v5H3V9l-1 .5Z" /></svg>
        <svg width="17" height="17" viewBox="0 0 17 17" fill="#fff" stroke="#87979d"><path d="M8.500 1l2 5.500 6 .1-4.800 3.600L13.500 16l-5-3.500-5 3.500 1.800-5.800L.5 6.600l6-.1Z" /></svg>
        <svg width="17" height="17" viewBox="0 0 17 17" fill="none">
          <circle cx="8.500" cy="8.500" r="6.800" stroke="#87979d" strokeWidth="3" strokeDasharray="3 2.340" />
          <circle cx="8.500" cy="8.500" r="4.500" stroke="#87979d" strokeWidth="4.500" />
          <circle cx="8.500" cy="8.500" r="6.500" stroke="#fff" strokeWidth="2" strokeDasharray="2.500 2.600" />
          <circle cx="8.500" cy="8.500" r="4.500" stroke="#fff" strokeWidth="2.800" />
        </svg>
      </ChromeTools>
      <BrowserCaption><CaptionSet max={<RestoreGlyph />} /></BrowserCaption>
    </Chrome>
    <Viewport>
      <Page>
        <PageHeader>
          <SearchRow>
            <Brand href="#"><BingMark w={23} h={27} fill="#505050" />bing</Brand>
            <SearchInput aria-label="Search the web" defaultValue="192.168.1.32 hpc_intranet" />
            <SearchButton type="button" aria-label="Search" />
          </SearchRow>
          <PageNav><PageNavLink href="#">Web</PageNavLink></PageNav>
        </PageHeader>
        <Results>
          <Lead>No results</Lead>
          <Lead>Try one</Lead>
          <ResultList>
            {results.map(r => {
              const [lead, rest] = r.text.split("|");
              const body = rest ? <><b>{lead}</b> {rest}</> : r.bold ? <b>{r.text}</b> : r.text;
              return <li key={r.text}>{r.link ? <ResultLink href="#">{body}</ResultLink> : body}</li>;
            })}
          </ResultList>
        </Results>
        <Footer>
          <div><FooterHead>Learn more</FooterHead><p><a href="#">Privacy and Cookies</a></p><p><a href="#">Legal</a></p></div>
          <div><FooterHead>Info for</FooterHead><p><a href="#">Advertise</a></p></div>
          <div><FooterHead>Support</FooterHead><p><a href="#">Help</a></p><p><Feedback href="#">Feedback</Feedback></p></div>
          <div><FooterHead $brand>Microsoft</FooterHead><p><a href="#">European Data Protection</a></p><p>© 2015 Microsoft</p></div>
        </Footer>
      </Page>
      <PageScroll><Chevron dir="up" size={14} c="#bdbdbd" sw={2} /><Chevron dir="down" size={14} c="#bdbdbd" sw={2} /></PageScroll>
    </Viewport>
  </>
);

const Manager = () => (
  <IisWindow aria-label="Internet Information Services (IIS) Manager">
    <TitleBar>
      <IisIcon size={17} />
      <h1>Internet Information Services (IIS) Manager</h1>
      <CaptionSet max={<MaxGlyph />} />
    </TitleBar>
    <Client>
      <CrumbRow>
        <svg width="54" height="26" viewBox="0 0 54 26" role="img" aria-label="Back and forward">
          <path d="M12 1c7 0 8 2 15 2s8-2 15-2c8 0 12 5 12 11s-4 13-11 13c-6 0-7-5-16-5s-9 5-15 5C4 25 0 19 0 13S5 1 12 1Z" fill="#d3d9e8" />
          <path d="M0 13C0 6 5 1 12 1c7 0 8 2 15 2s8-2 15-2c5 0 8 1 10 4" fill="none" stroke="#9aa3b5" />
          <circle cx="13" cy="14" r="9" fill="#e9ecf4" stroke="#808894" />
          <path d="M18 14H9M12.500 10l-4 4 4 4" fill="none" stroke="#4d5358" strokeWidth="2" />
          <circle cx="44" cy="14" r="9" fill="#dde1ec" stroke="#b7bcc8" />
          <path d="M39 13h6v-3l4 4-4 4v-3h-6Z" fill="#eef0f6" stroke="#b4b9c5" strokeWidth=".8" />
        </svg>
        <CrumbBar>
          <CrumbGlobe><Globe size={16} /></CrumbGlobe>
          <Tri /><Crumb href="#">CD-DBTEST</Crumb>
          <Tri /><Crumb href="#">Sites</Crumb>
          <Tri /><Crumb href="#">hpc_intranet</Crumb>
          <Tri />
        </CrumbBar>
        <CrumbTools>
          <RefreshIcon /><StopLoadIcon /><HouseIcon /><ToolRule /><HelpIcon /><Caret />
        </CrumbTools>
      </CrumbRow>
      <MenuBar><button>File</button><button>View</button><button>Help</button></MenuBar>
      <Body>
        <Panel>
          <PanelTitle>Connections</PanelTitle>
          <PanelTools>
            <ToolGroup><ConnectIcon /><Caret /></ToolGroup>
            <ToolGroup><SaveIcon /></ToolGroup>
            <ToolGroup><ToolRule $dark /><FolderIcon kind="up" /></ToolGroup>
            <ToolGroup><ToolRule $dark /><ConnectIcon remove /></ToolGroup>
          </PanelTools>
          <Tree>
            <TreeRow $depth={0}><Twisty /><Dots /><Node href="#"><IisIcon />Start Page</Node></TreeRow>
            <TreeRow $depth={0}><Twisty><Expanded /></Twisty><Dots /><Node href="#"><IisIcon arrow={false} />CD-DBTEST (CDPROV\admin</Node></TreeRow>
            <TreeRow $depth={1}><Twisty /><Dots /><Node href="#"><PoolsIcon />Application Pools</Node></TreeRow>
            <TreeRow $depth={1}><Twisty><Expanded /></Twisty><Dots /><Node href="#"><FolderIcon kind="sites" />Sites</Node></TreeRow>
            {sites.map(s => (
              <TreeRow $depth={2} key={s}><Twisty><Tri c="#555" open size={6} /></Twisty><Dots /><Node href="#" $selected={s === "hpc_intranet"}><Globe />{s}</Node></TreeRow>
            ))}
          </Tree>
          <HScroll>
            <ScrollButton aria-label="Scroll left"><Chevron dir="left" /></ScrollButton>
            <HThumb><Grip /><Grip /><Grip /></HThumb>
            <span />
            <ScrollButton aria-label="Scroll right"><Chevron dir="right" /></ScrollButton>
          </HScroll>
        </Panel>
        <Center>
          <HomePanel>
            <HomeTitle><Globe size={30} /><h1>hpc_intranet Home</h1></HomeTitle>
            <FeatureBox>
              <FilterBar>Filter:</FilterBar>
              <GroupHead>IIS<i /><Chevron dir="up" c="#222" /></GroupHead>
              <Feature href="#" $h={76}><FeatureArt><AuthIcon /></FeatureArt>Authentic...</Feature>
              <Feature href="#" $h={78}><FeatureArt><IpIcon /></FeatureArt>IP Address<br />and Domain</Feature>
              <GroupHead>Management<i /><Chevron dir="up" c="#222" /></GroupHead>
              <Feature href="#" $h={76}><FeatureArt><FormIcon size={26} /></FeatureArt>Configuration<br />Editor</Feature>
            </FeatureBox>
          </HomePanel>
          <ViewTabs>
            <ViewTab $on><FeaturesIcon />Features View</ViewTab>
            <ViewTab><ContentIcon />Content View</ViewTab>
          </ViewTabs>
        </Center>
        <Panel>
          <PanelTitle>Actions</PanelTitle>
          <ActionBody>
            <ActionList>
              <Action icon={<FolderIcon kind="explore" />}>Explore</Action>
              <Action>Edit Permissions...</Action>
              <Rule />
              <Head>Edit Site</Head>
              <Action>Bindings...</Action>
              <Action icon={<FormIcon />}>Basic Settings...</Action>
              <Rule />
              <Action>View Applications</Action>
              <Action>View Virtual Directories</Action>
              <Rule $tight />
              <Group>Manage Website</Group>
              <Action icon={<RestartIcon />}>Restart</Action>
              <Action icon={<PlayIcon />} off>Start</Action>
              <Action icon={<StopIcon />}>Stop</Action>
              <Rule />
              <Head>Browse Website</Head>
              <ActionTall><ActionIcon><BrowseIcon /></ActionIcon><ActionLink href="#">Browse hpc_intranet on<br />192.168.1.32:80 (http)</ActionLink></ActionTall>
              <Rule />
              <Action>Advanced Settings...</Action>
              <Rule />
              <Head>Configure</Head>
              <Action>Failed Request Tracing...</Action>
              <Action>Limits...</Action>
              <Rule />
              <Action>Add FTP Publishing...</Action>
              <Rule $tight />
              <Group>Deploy</Group>
              <Action icon={<ExportIcon />}>Export Application...</Action>
              <Action icon={<ImportIcon />}>Import Application...</Action>
            </ActionList>
            <VScroll>
              <ScrollButton aria-label="Scroll up"><Chevron dir="up" /></ScrollButton>
              <VThumb><Grip $v /><Grip $v /><Grip $v /></VThumb>
              <span />
              <ScrollButton aria-label="Scroll down"><Chevron dir="down" /></ScrollButton>
            </VScroll>
          </ActionBody>
        </Panel>
      </Body>
      <StatusBar>
        <span>Ready</span>
        <IisIcon arrow={false} />
        <svg width="10" height="10" viewBox="0 0 10 10" fill="#9a9a9a"><path d="M8 0h2v2H8zM8 4h2v2H8zM4 4h2v2H4zM8 8h2v2H8zM4 8h2v2H4zM0 8h2v2H0z" /></svg>
      </StatusBar>
    </Client>
  </IisWindow>
);

const SiteBindings = () => (
  <BindingsWindow role="dialog" aria-label="Site Bindings">
    <TitleBar><h1>Site Bindings</h1><DialogCaption /></TitleBar>
    <Client>
      <BindingsForm>
        <ListBox>
          <BindingsTable>
            <thead><tr><th>Type</th></tr></thead>
            <tbody><tr><td>http</td></tr></tbody>
          </BindingsTable>
        </ListBox>
        <ButtonColumn>
          <DialogButton $w={103}>Add...</DialogButton>
          <DialogButton $w={103}>Edit...</DialogButton>
          <DialogButton $w={103} disabled>Remove</DialogButton>
          <DialogButton $w={103}>Browse</DialogButton>
        </ButtonColumn>
        <CloseRow><DialogButton $w={103}>Close</DialogButton></CloseRow>
      </BindingsForm>
    </Client>
  </BindingsWindow>
);

const EditBinding = () => (
  <EditWindow $active role="dialog" aria-label="Edit Site Binding">
    <TitleBar><h1>Edit Site Binding</h1><DialogCaption active /></TitleBar>
    <Client $active>
      <EditForm onSubmit={e => e.preventDefault()}>
        <FieldRow>
          <Field $w={116}>
            <Label htmlFor="type" $in>Type:</Label>
            <SelectWrap>
              <TypeSelect id="type" disabled defaultValue="http"><option>http</option></TypeSelect>
              <Chevron dir="down" c="#b5b5b5" sw={2.4} />
            </SelectWrap>
          </Field>
          <Field $w={212}>
            <Label htmlFor="ip">IP address:</Label>
            <Combo>
              <ComboInput id="ip" defaultValue="192.168.1.32" />
              <GlyphButton type="button" aria-label="Show addresses"><Chevron dir="down" sw={2.4} /></GlyphButton>
            </Combo>
          </Field>
          <Field $w={58}>
            <Label htmlFor="port">Port:</Label>
            <TextBox id="port" defaultValue="80" />
          </Field>
        </FieldRow>
        <FieldRow>
          <Field $w={302}>
            <Label htmlFor="host" $in>Host name:</Label>
            <TextBox id="host" defaultValue="hpc_intranet" />
          </Field>
        </FieldRow>
        <Hint>Example: www.contoso.com or marketing.contoso.com</Hint>
        <DialogFooter>
          <DialogButton $w={91} disabled>OK</DialogButton>
          <DialogButton $w={91}>Cancel</DialogButton>
        </DialogFooter>
      </EditForm>
    </Client>
  </EditWindow>
);

export default function App() {
  return (
    <Desktop>
      <GlobalStyle />
      <Defs />
      <Browser />
      <Manager />
      <SiteBindings />
      <EditBinding />
      <Taskbar>
        <TaskButtons>
          <TaskButton aria-label="Server Manager"><ServerManagerIcon /></TaskButton>
          <TaskButton aria-label="PowerShell"><PowerShellIcon /></TaskButton>
          <TaskButton aria-label="File Explorer"><ExplorerIcon /></TaskButton>
          <TaskButton aria-label="pgAdmin"><ElephantIcon /></TaskButton>
          <TaskButton aria-label="WordPad"><WordPadIcon /></TaskButton>
          <TaskButton aria-label="Internet Explorer" $w={53}><IeIcon size={34} /></TaskButton>
          <Stack /><Stack />
          <TaskButton aria-label="IIS Manager" $active><IisIcon size={34} /></TaskButton>
          <TaskButton aria-label="IIS 6.0 Manager"><SitesIcon /></TaskButton>
          <TaskButton aria-label="Control Panel" $w={56}><ControlIcon /></TaskButton>
          <Stack />
        </TaskButtons>
        <Tray>
          <TrayToggle aria-label="Show hidden icons"><Caret up /></TrayToggle>
          <FlagIcon /><NetIcon /><SoundIcon />
          <Lang>ENG</Lang>
          <Clock>14:58<br />14/07/2015</Clock>
        </Tray>
      </Taskbar>
    </Desktop>
  );
}
